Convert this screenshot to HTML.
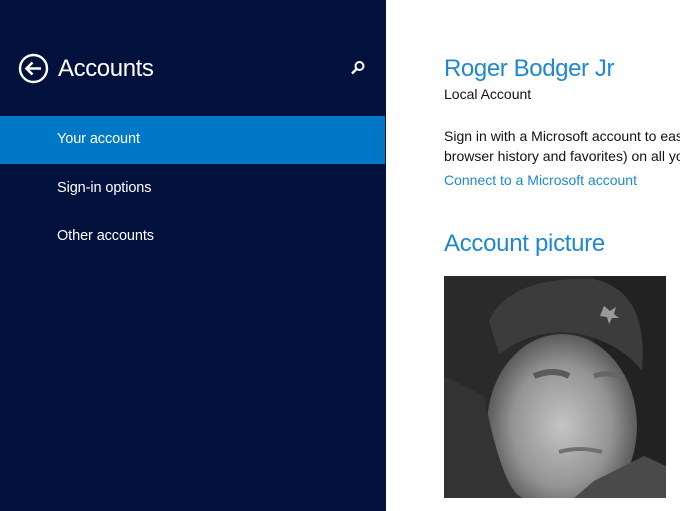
<!DOCTYPE html>
<html><head><meta charset="utf-8"><style>
*{margin:0;padding:0;box-sizing:border-box}
body{width:680px;height:511px;overflow:hidden;background:#fff;font-family:"Liberation Sans",sans-serif;position:relative}
#side{position:absolute;left:0;top:0;width:386px;height:511px;background:#03123d}
.t{position:absolute;white-space:nowrap}
#sel{position:absolute;left:0;top:116px;width:385px;height:48px;background:#0078c8}
.nav{color:#fff;font-size:14.5px;left:57px;letter-spacing:-0.1px}
</style></head><body>
<div id="side">
<svg style="position:absolute;left:18px;top:53px" width="31" height="31" viewBox="0 0 31 31"><circle cx="15.5" cy="15.5" r="13.5" fill="none" stroke="#fff" stroke-width="2.4"/><path d="M23 15.5H9M14.5 9.5L8.5 15.5L14.5 21.5" fill="none" stroke="#fff" stroke-width="2.6"/></svg>
<div class="t" style="left:58px;top:55px;color:#fff;font-size:24px;letter-spacing:-0.4px">Accounts</div>
<svg style="position:absolute;left:350px;top:60px" width="16" height="16" viewBox="0 0 16 16"><circle cx="9.5" cy="6" r="4" fill="none" stroke="#fff" stroke-width="2"/><path d="M6.7 8.8L2 13.5" stroke="#fff" stroke-width="2.4"/></svg>
<div id="sel"></div>
<div class="t nav" style="top:131px">Your account</div>
<div class="t nav" style="top:180px">Sign-in options</div>
<div class="t nav" style="top:228px">Other accounts</div>
</div>
<div class="t" style="left:444px;top:55px;color:#1e88d0;font-size:24px;letter-spacing:-0.4px">Roger Bodger Jr</div>
<div class="t" style="left:444px;top:86px;color:#111;font-size:14px">Local Account</div>
<div class="t" style="left:444px;top:128px;color:#111;font-size:14px">Sign in with a Microsoft account to eas</div>
<div class="t" style="left:444px;top:148px;color:#111;font-size:14px">browser history and favorites) on all yo</div>
<div class="t" style="left:444px;top:172px;color:#1e88d0;font-size:14px">Connect to a Microsoft account</div>
<div class="t" style="left:444px;top:230px;color:#1e88d0;font-size:24px;letter-spacing:-0.3px">Account picture</div>
<svg style="position:absolute;left:444px;top:276px" width="222" height="222" viewBox="0 0 222 222">
<defs><radialGradient id="f" cx="0.5" cy="0.5" r="0.55"><stop offset="0" stop-color="#c4c4c4"/><stop offset="0.6" stop-color="#949494"/><stop offset="1" stop-color="#4a4a4a"/></radialGradient></defs>
<rect width="222" height="222" fill="#2a2a2a"/>
<rect x="150" y="0" width="72" height="222" fill="#222"/>
<ellipse cx="118" cy="150" rx="75" ry="92" fill="url(#f)"/>
<path d="M45 45Q65 0 150 3Q205 15 198 95Q180 72 150 62Q100 45 55 78Z" fill="#3c3c3c"/>
<path d="M90 100Q110 92 125 100" stroke="#5a5a5a" stroke-width="6" fill="none"/>
<path d="M150 100Q165 95 180 102" stroke="#666" stroke-width="5" fill="none"/>
<path d="M115 176Q135 170 158 176" stroke="#707070" stroke-width="4" fill="none"/>
<path d="M40 120Q60 220 80 222H0V100Z" fill="#333"/>
<path d="M150 205L200 180L222 190V222H130Z" fill="#4a4a4a"/>
<path d="M160 30l6 5 6-4-2 7 5 4-7 0-3 6-2-7-7-1z" fill="#999"/>
</svg>
</body></html>
